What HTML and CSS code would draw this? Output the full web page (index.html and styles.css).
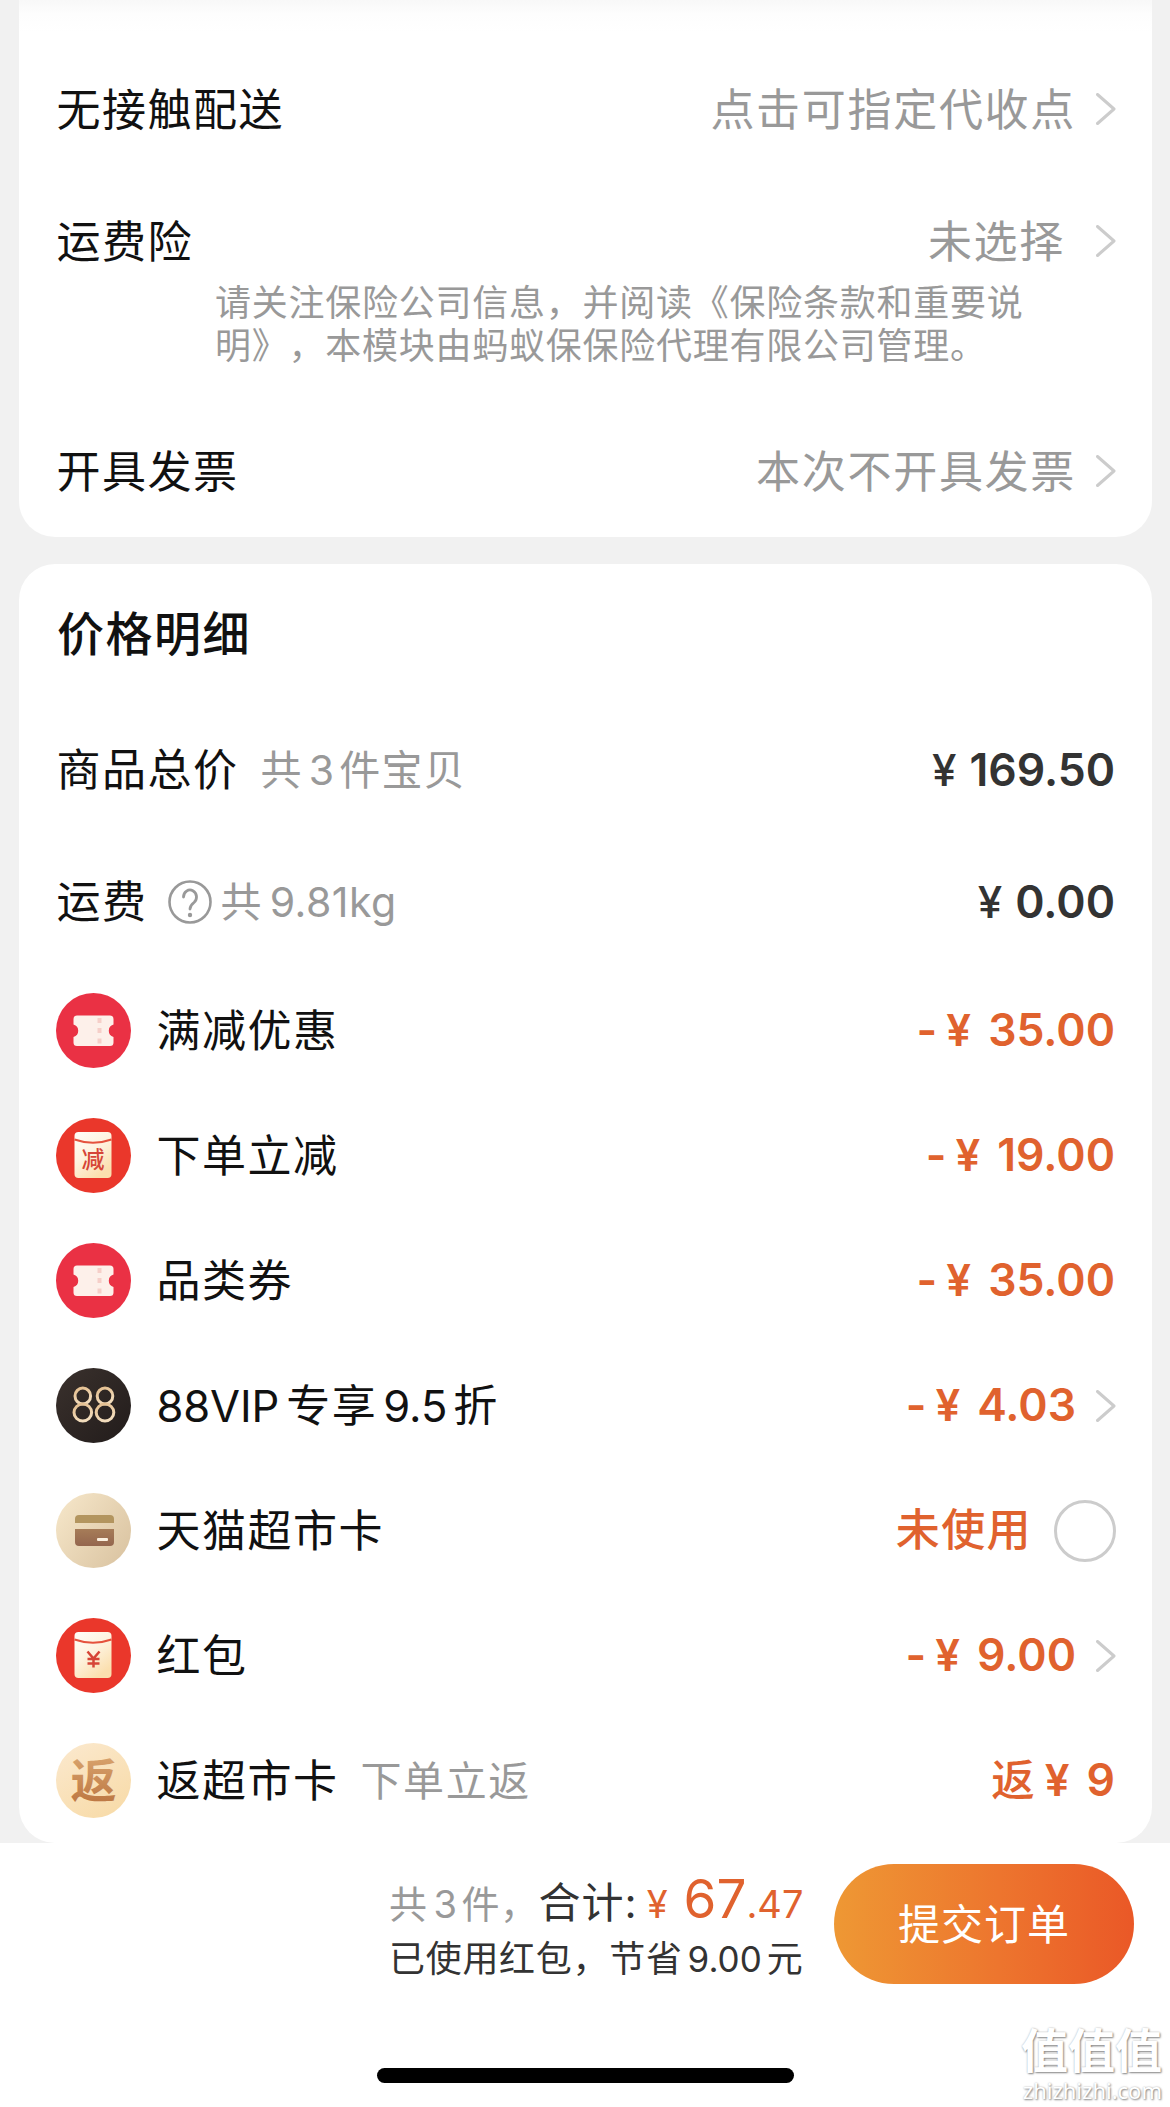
FILE: index.html
```html
<!DOCTYPE html>
<html lang="zh-CN">
<head>
<meta charset="utf-8">
<title>确认订单</title>
<link rel="stylesheet" href="styles.css">
</head>
<body>
<svg class="defs" width="0" height="0" aria-hidden="true">
  <defs>
    <linearGradient id="cream" x1="0" y1="0" x2="0.6" y2="1"><stop offset="0" stop-color="#fffdf8"/><stop offset="0.5" stop-color="#fef3e0"/><stop offset="1" stop-color="#fbdfae"/></linearGradient>
    <linearGradient id="sand" x1="0" y1="0" x2="1" y2="0.7"><stop offset="0" stop-color="#f7e8cb"/><stop offset="1" stop-color="#dcc6a4"/></linearGradient>
    <linearGradient id="peach" x1="0" y1="0" x2="0.6" y2="1"><stop offset="0" stop-color="#fbe9cf"/><stop offset="1" stop-color="#f8dcab"/></linearGradient>
    <linearGradient id="bronze" x1="0" y1="0" x2="0" y2="1"><stop offset="0" stop-color="#a67c58"/><stop offset="1" stop-color="#94664e"/></linearGradient>
    <linearGradient id="copper" x1="0" y1="0" x2="0" y2="1"><stop offset="0" stop-color="#dfae78"/><stop offset="1" stop-color="#b9713c"/></linearGradient>
    <linearGradient id="gold" x1="0" y1="0" x2="0.4" y2="1"><stop offset="0" stop-color="#e3bd8d"/><stop offset="1" stop-color="#f2dcbc"/></linearGradient>
    <linearGradient id="ink" x1="0" y1="0" x2="1" y2="1"><stop offset="0" stop-color="#3a312d"/><stop offset="1" stop-color="#221c1b"/></linearGradient>
    <symbol id="chevron" viewBox="0 0 20 32"><path d="M1.500 1.500 18 16 1.500 30.500" fill="none" stroke="#ccc" stroke-width="3" stroke-linecap="round" stroke-linejoin="round"/></symbol>
    <symbol id="ticket" viewBox="0 0 75 75">
      <circle cx="37.500" cy="37.500" r="37.500" fill="#ea3144"/>
      <path d="M21 22.500H54a3.500 3.500 0 0 1 3.500 3.500v5.500a6.500 6.500 0 0 0 0 12.500v5.500a3.500 3.500 0 0 1-3.500 3.500H21a3.500 3.500 0 0 1-3.500-3.500v-5.500a6.500 6.500 0 0 0 0-12.500V26a3.500 3.500 0 0 1 3.500-3.500z" fill="#fdf0ea"/>
      <path d="M43.500 25v5M43.500 35v5M43.500 45.500v5" stroke="#f6cfc9" stroke-width="4"/>
    </symbol>
    <symbol id="packet" viewBox="0 0 75 75">
      <circle cx="37.500" cy="37.500" r="37.500" fill="#ea372b"/>
      <rect x="18.500" y="14" width="37" height="46" rx="4" fill="url(#cream)"/>
      <path d="M18.500 21.500Q37 28 55.500 21.500" fill="none" stroke="#e5523d" stroke-width="2"/>
    </symbol>
  </defs>
</svg>
<main class="page">
  <section class="card delivery">
    <div class="row"><span class="label">无接触配送</span><span class="value">点击可指定代收点</span><svg class="chevron"><use href="#chevron"/></svg></div>
    <div class="row insurance"><span class="label">运费险</span><span class="value unset">未选择</span><svg class="chevron"><use href="#chevron"/></svg></div>
    <p class="note">请关注保险公司信息，并阅读《保险条款和重要说<br>明》，本模块由蚂蚁保保险代理有限公司管理。</p>
    <div class="row invoice"><span class="label">开具发票</span><span class="value">本次不开具发票</span><svg class="chevron"><use href="#chevron"/></svg></div>
  </section>

  <section class="card prices">
    <h2 class="title">价格明细</h2>
    <div class="row"><span class="label">商品总价</span><span class="hint total-hint">共<span class="num">3</span>件宝贝</span><span class="price"><span class="yen">¥</span>169.50</span></div>
    <div class="row"><span class="label">运费</span>
      <svg class="help" viewBox="0 0 44 44"><circle cx="22" cy="22" r="20.500" fill="none" stroke="#999" stroke-width="2.600"/><path d="M15.500 17a6.500 7 0 1 1 10.500 5.500c-2.500 2-4 3.300-4 6.500" fill="none" stroke="#999" stroke-width="2.800" stroke-linecap="round"/><circle cx="22" cy="35" r="2.200" fill="#999"/></svg>
      <span class="hint">共<span class="weight">9.81kg</span></span><span class="price"><span class="yen">¥</span>0.00</span></div>

    <div class="row item"><svg class="icon"><use href="#ticket"/></svg><span class="label">满减优惠</span><span class="price cut"><span class="minus">-</span><span class="yen">¥</span>35.00</span></div>
    <div class="row item"><svg class="icon" viewBox="0 0 75 75"><use href="#packet"/><text class="packet-char" x="37" y="49.500">减</text></svg><span class="label">下单立减</span><span class="price cut"><span class="minus">-</span><span class="yen">¥</span>19.00</span></div>
    <div class="row item"><svg class="icon"><use href="#ticket"/></svg><span class="label">品类券</span><span class="price cut"><span class="minus">-</span><span class="yen">¥</span>35.00</span></div>
    <div class="row item"><svg class="icon" viewBox="0 0 75 75"><circle cx="37.500" cy="37.500" r="37.500" fill="url(#ink)"/><g fill="none" stroke="url(#gold)" stroke-width="3"><ellipse cx="26.800" cy="28" rx="7.800" ry="8"/><ellipse cx="26.800" cy="44.500" rx="8.800" ry="8.500"/><ellipse cx="49" cy="28" rx="7.800" ry="8"/><ellipse cx="49" cy="44.500" rx="8.800" ry="8.500"/></g></svg><span class="label"><span class="latin">88VIP</span><span class="mid">专享</span><span class="latin rate">9.5</span>折</span><span class="price cut"><span class="minus">-</span><span class="yen">¥</span>4.03</span><svg class="chevron"><use href="#chevron"/></svg></div>
    <div class="row item"><svg class="icon" viewBox="0 0 75 75"><circle cx="37.500" cy="37.500" r="37.500" fill="url(#sand)"/><path d="M23 22h31a4 4 0 0 1 4 4v4H19v-4a4 4 0 0 1 4-4z" fill="#b3955f"/><path d="M19 36h39v13a4 4 0 0 1-4 4H23a4 4 0 0 1-4-4z" fill="url(#bronze)"/><rect x="41" y="45" width="11" height="3" rx="1" fill="#fbf0e0"/></svg><span class="label">天猫超市卡</span><span class="price cut unused">未使用</span><span class="radio"></span></div>
    <div class="row item"><svg class="icon" viewBox="0 0 75 75"><use href="#packet"/><path d="M31.500 33.500 37.500 40.500 43.500 33.500M37.500 40.500V49.500M31.500 41H43.500M31.500 45.500H43.500" fill="none" stroke="#d64537" stroke-width="2.500"/></svg><span class="label">红包</span><span class="price cut"><span class="minus">-</span><span class="yen">¥</span>9.00</span><svg class="chevron"><use href="#chevron"/></svg></div>
    <div class="row item"><svg class="icon" viewBox="0 0 75 75"><circle cx="37.500" cy="37.500" r="37.500" fill="url(#peach)"/><text class="return-char" x="37.500" y="54" fill="url(#copper)">返</text></svg><span class="label">返超市卡</span><span class="hint back-hint">下单立返</span><span class="price cut"><span class="back">返</span><span class="yen">¥</span>9</span></div>
  </section>

  <footer class="bar">
    <div class="checkout">
      <div class="summary">
        <div class="sum"><span class="count">共<span class="num">3</span>件，</span><span class="sum-label">合计:</span><span class="sum-yen">¥</span><span class="sum-int">67</span><span class="sum-dec">.47</span></div>
        <div class="saved">已使用红包，节省<span class="saved-num">9.00</span>元</div>
      </div>
      <button class="submit" type="button">提交订单</button>
    </div>
    <div class="home"></div>
  </footer>
  <div class="watermark"><span class="wm-name">值值值</span><span class="wm-site">zhizhizhi.com</span></div>
</main>
</body>
</html>
```
FILE: styles.css
```css
* { box-sizing: border-box; }

body {
  margin: 0;
  background: #f1f1f1;
  font-family: Inter, "Noto Sans CJK SC", sans-serif;
  color: #111;
  text-spacing-trim: space-all;
}

.defs { display: block; height: 0; }

.page {
  position: relative;
  width: 1170px;
  height: 2107px;
  overflow: hidden;
}

.card {
  width: 1133px;
  margin-left: 19px;
  padding: 0 36px 0 38px;
  background: #fff;
}

.delivery {
  height: 537px;
  padding-top: 43px;
  border-radius: 0 0 36px 36px;
  background: linear-gradient(#f8f8f8, #fdfdfd 14px, #fff 32px);
}

.prices {
  height: 1279px;
  margin-top: 27px;
  padding-top: 34px;
  border-radius: 36px;
}

.row {
  display: flex;
  align-items: center;
  height: 132px;
  white-space: nowrap;
  line-height: 60px;
}

.item { height: 125px; }
.insurance { height: 106px; padding-top: 26px; }
.invoice { margin-top: 38px; }

.label { font-size: 44px; letter-spacing: 1.5px; margin-left: -0.5px; }
.value { margin-left: auto; font-size: 44px; letter-spacing: 1.7px; color: #999; }
.delivery .label, .delivery .value { padding-top: 2px; }
.unset { margin-right: 11px; }
.chevron { flex: none; width: 20px; height: 32px; margin-left: 20px; }

.note {
  margin: 0 0 0 158px;
  padding-top: 1px;
  font-size: 36px;
  line-height: 42.5px;
  letter-spacing: 0.75px;
  color: #999;
  white-space: nowrap;
}

.title {
  height: 72px;
  margin: 0 0 34px;
  font-size: 47px;
  line-height: 72px;
  font-weight: 500;
  letter-spacing: 1.5px;
}

.hint { font-size: 41px; letter-spacing: 1.2px; color: #999; }
.total-hint { margin-left: 22px; }
.back-hint { margin-left: 22px; letter-spacing: 1.6px; }
.num { margin: 0 4px 0 6px; }
.weight { margin-left: 7px; letter-spacing: 0.5px; }
.help { width: 44px; height: 44px; margin: 0 9px 0 20px; }

.price {
  margin-left: auto;
  padding-bottom: 1px;
  font-size: 44.5px;
  font-weight: 600;
  color: #333;
}
.price:last-child { margin-right: 1px; }
.yen { margin-right: 13px; font-size: 44px; font-weight: 500; }
.cut { color: #e0622e; }
.cut .yen { margin-right: 17px; font-weight: 600; }
.minus { margin-right: 9px; }
.unused { font-size: 44px; font-weight: 500; letter-spacing: 1.4px; }
.back { margin-right: 10px; font-size: 43.5px; font-weight: 500; }

.icon { flex: none; width: 75px; height: 75px; margin: 0 26px 0 -1px; }
.packet-char { font: 500 23px "Noto Sans CJK SC", sans-serif; fill: #d64537; text-anchor: middle; }
.return-char { font: 700 46px "Noto Sans CJK SC", sans-serif; text-anchor: middle; }
.latin { font-size: 43.5px; letter-spacing: -0.1px; }
.mid { margin: 0 6px 0 7px; }
.rate { margin-right: 6px; }
.radio { width: 62px; height: 62px; margin-left: 22px; border: 3px solid #ccc; border-radius: 50%; }

.bar { height: 264px; background: #fff; }
.checkout { display: flex; justify-content: flex-end; height: 141px; padding: 21px 36px 0 0; }
.summary { width: 414px; margin-right: 31px; white-space: nowrap; }
.sum { display: flex; align-items: baseline; height: 66px; line-height: 71px; color: #333; }
.count { width: 153px; font-size: 38px; letter-spacing: 0.5px; color: #999; }
.sum-label { font-size: 42px; letter-spacing: 1px; }
.sum-yen { margin-left: 9px; font-size: 38px; color: #e0622e; }
.sum-int { margin-left: 16px; font-size: 53px; color: #e0622e; }
.sum-dec { font-size: 38px; color: #e0622e; }
.saved { font-size: 36px; line-height: 58px; letter-spacing: 0.7px; color: #333; }
.saved-num { margin: 0 5px; font-size: 35px; letter-spacing: 0; }

.submit {
  width: 300px;
  height: 120px;
  padding: 0 0 5px;
  border: 0;
  border-radius: 60px;
  background: linear-gradient(90deg, #ee9834, #ed752e 55%, #ea5827);
  font: 400 42px Inter, "Noto Sans CJK SC", sans-serif;
  letter-spacing: 1px;
  color: #fff;
}

.home { width: 417px; height: 15px; margin: 84px 0 0 377px; border-radius: 8px; background: #000; }

/* site mark overlaid on the lower right corner */
.watermark {
  position: absolute;
  right: 8px;
  bottom: 4px;
  display: flex;
  flex-direction: column;
  align-items: flex-end;
  color: #fff;
  font-family: "Noto Sans", "Noto Sans CJK SC", sans-serif;
  text-shadow: 1px 1px 2px #888, 0 0 2px #bbb;
}
.wm-name { font-size: 47px; line-height: 54px; font-weight: 700; }
.wm-site { font-size: 22px; line-height: 26px; }
```
